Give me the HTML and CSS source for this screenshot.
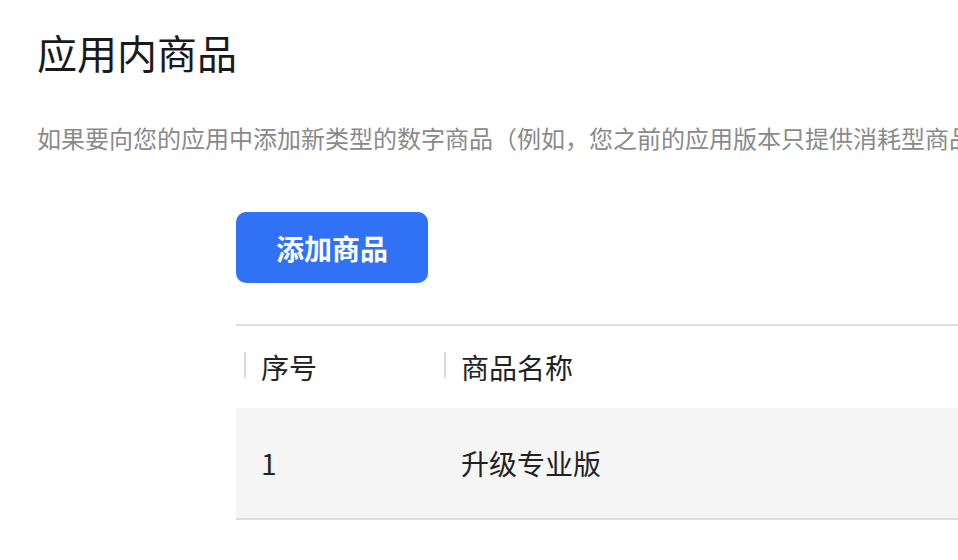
FILE: index.html
```html
<!DOCTYPE html>
<html lang="zh-CN">
<head>
<meta charset="utf-8">
<title>应用内商品</title>
<link rel="stylesheet" href="styles.css">
</head>
<body>
<main class="page">
  <h1 class="title">应用内商品</h1>
  <p class="desc">如果要向您的应用中添加新类型的数字商品（例如，您之前的应用版本只提供消耗型商品，而现在要提供订阅），请先在此处创建相应的商品。</p>
  <section class="content">
    <button class="btn-primary" type="button">添加商品</button>
    <div class="table">
      <div class="row head">
        <div class="cell col-index"><span class="sep"></span>序号</div>
        <div class="cell col-name"><span class="sep"></span>商品名称</div>
      </div>
      <div class="row body-row">
        <div class="cell col-index">1</div>
        <div class="cell col-name">升级专业版</div>
      </div>
    </div>
  </section>
</main>
</body>
</html>
```
FILE: styles.css
```css
html, body {
  margin: 0;
  padding: 0;
  overflow: hidden;
  background: #ffffff;
}
body {
  width: 958px;
  height: 560px;
  font-family: "Noto Sans CJK SC", "Noto Sans", sans-serif;
  color: #1f1f1f;
}
.page {
  padding: 24px 0 0 37px;
}
.title {
  margin: 0;
  font-size: 40px;
  line-height: 56px;
  font-weight: 400;
  color: #1a1a1a;
}
.desc {
  margin: 41px 0 0 0;
  font-size: 24px;
  line-height: 34px;
  color: #8a8a8a;
  white-space: nowrap;
}
.content {
  padding-left: 199px;
  margin-top: 57px;
}
.btn-primary {
  display: flex;
  align-items: center;
  justify-content: center;
  width: 192px;
  height: 71px;
  border: 0;
  border-radius: 10px;
  background: #3071f5;
  color: #ffffff;
  font-family: inherit;
  font-size: 28px;
  font-weight: 700;
  padding: 0;
}
.table {
  margin-top: 41px;
  width: 760px;
  border-top: 2px solid #dddddd;
}
.row {
  display: flex;
  align-items: center;
  font-size: 28px;
  color: #222222;
}
.head {
  height: 82px;
}
.body-row {
  height: 110px;
  background: #f5f5f5;
  border-bottom: 2px solid #dddddd;
}
.cell {
  display: flex;
  align-items: center;
  padding-left: 25px;
  position: relative;
  box-sizing: border-box;
}
.col-index {
  width: 200px;
}
.col-name {
  flex: 1;
}
.sep {
  position: absolute;
  left: 8px;
  top: 50%;
  width: 2px;
  height: 26px;
  margin-top: -15px;
  background: #dddddd;
}
```
